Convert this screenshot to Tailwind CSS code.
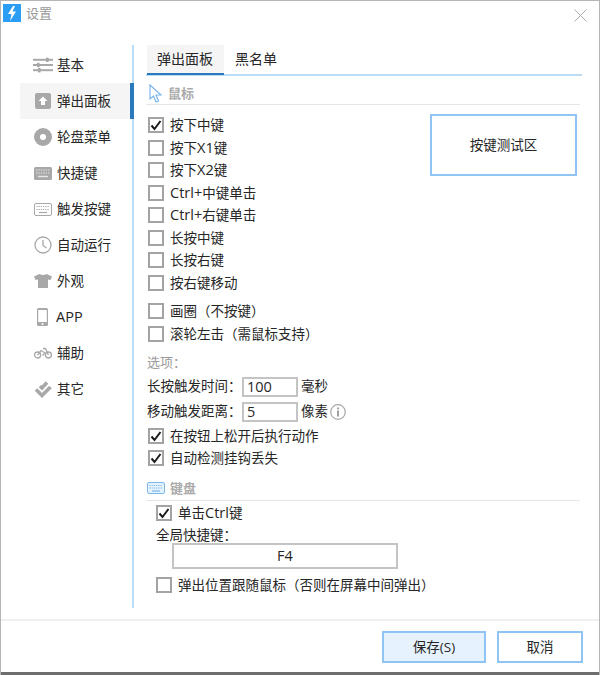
<!DOCTYPE html>
<html lang="zh-CN">
<head>
    <meta charset="UTF-8">
    <title>设置</title>
    <script src="https://cdn.jsdelivr.net/npm/@tailwindcss/browser@4"></script>
</head>
<body class="bg-white">
<div class="w-[600px] h-[675px] flex flex-col bg-white overflow-hidden border-x border-t border-[#b5b5b5] font-['Open_Sans','Noto_Sans_CJK_SC',sans-serif] text-[13.5px] text-[#262626] relative">
    <!-- title bar -->
    <div class="h-[44px] shrink-0 flex items-start pt-[3px] pl-[2px]">
        <div class="w-[18px] h-[18px] bg-[#2a9df4] flex items-center justify-center">
            <svg width="10" height="15" viewBox="0 0 10 15"><path d="M6 0 L1 8 L4.5 8 L3 15 L9 5.5 L5.5 5.5 L8 0 Z" fill="#fff"/></svg>
        </div>
        <span class="ml-[5px] text-[13px] leading-[18px] text-[#999]">设置</span>
        <svg class="ml-auto mr-[12px] mt-[5px]" width="13" height="13" viewBox="0 0 13 13"><path d="M0.5 0.5 L12.5 12.5 M12.5 0.5 L0.5 12.5" stroke="#aaa" stroke-width="1" fill="none"/></svg>
    </div>

    <div class="flex h-[563px] shrink-0">
        <!-- sidebar -->
        <div class="w-[133px] shrink-0 border-r-2 border-[#bcdcf6] pl-[19px] flex flex-col">
            <div class="h-[38px] pt-[2px] shrink-0 flex items-center w-[112px]">
                <svg class="ml-[13px] w-[20px] h-[16px]" viewBox="0 0 20 16" fill="#a8a8a8"><rect y="1.8" width="20" height="2"/><rect y="7" width="20" height="2"/><rect y="12.2" width="20" height="2"/><rect x="13" y="0.6" width="2.6" height="4.4"/><rect x="4" y="5.8" width="2.6" height="4.4"/><rect x="5" y="11" width="2.6" height="4.4"/></svg>
                <span class="ml-[4px]">基本</span>
            </div>
            <div class="h-[36px] shrink-0 flex items-center w-[114px] -mr-[2px] bg-[#f5f5f5] border-r-[4px] border-[#2a79bd]">
                <svg class="ml-[15px] w-[16px] h-[16px]" viewBox="0 0 16 16"><rect width="16" height="16" rx="2" fill="#a8a8a8"/><path d="M8 3.5 L12.5 8 L10 8 L10 12 L6 12 L6 8 L3.5 8 Z" fill="#fff"/></svg>
                <span class="ml-[6px]">弹出面板</span>
            </div>
            <div class="h-[36px] shrink-0 flex items-center">
                <svg class="ml-[14px] w-[18px] h-[18px]" viewBox="0 0 18 18"><circle cx="9" cy="9" r="6" fill="none" stroke="#a8a8a8" stroke-width="6"/></svg>
                <span class="ml-[5px]">轮盘菜单</span>
            </div>
            <div class="h-[36px] shrink-0 flex items-center">
                <svg class="ml-[14px] w-[18px] h-[13px]" viewBox="0 0 18 13"><rect width="18" height="13" rx="1.5" fill="#a8a8a8"/><path d="M2 3 H16 M2 6 H16" stroke="#e6e6e6" stroke-width="1.2" stroke-dasharray="1.4 1"/><path d="M4 9.5 H14" stroke="#e6e6e6" stroke-width="1.4"/></svg>
                <span class="ml-[5px]">快捷键</span>
            </div>
            <div class="h-[36px] shrink-0 flex items-center">
                <svg class="ml-[14px] w-[18px] h-[13px]" viewBox="0 0 18 13"><rect x="0.5" y="0.5" width="17" height="12" rx="1.5" fill="#fff" stroke="#a8a8a8"/><path d="M2.5 3.5 H15.5 M2.5 6.5 H15.5" stroke="#a8a8a8" stroke-width="1.2" stroke-dasharray="1.2 1"/><path d="M5 9.5 H13" stroke="#a8a8a8" stroke-width="1.2"/></svg>
                <span class="ml-[5px]">触发按键</span>
            </div>
            <div class="h-[36px] shrink-0 flex items-center">
                <svg class="ml-[14px] w-[18px] h-[18px]" viewBox="0 0 18 18" fill="none" stroke="#a8a8a8"><circle cx="9" cy="9" r="8" stroke-width="1.3"/><path d="M9 4 V9.5 L12.5 12" stroke-width="1.3"/></svg>
                <span class="ml-[5px]">自动运行</span>
            </div>
            <div class="h-[36px] shrink-0 flex items-center">
                <svg class="ml-[14px] w-[18px] h-[14px]" viewBox="0 0 18 14"><path d="M5.5 0 Q9 2 12.5 0 L18 2.5 L16.5 6 L14 5.5 L14 14 L4 14 L4 5.5 L1.5 6 L0 2.5 Z" fill="#a8a8a8"/></svg>
                <span class="ml-[5px]">外观</span>
            </div>
            <div class="h-[36px] shrink-0 flex items-center">
                <svg class="ml-[17px] w-[11px] h-[18px]" viewBox="0 0 11 18"><rect width="11" height="18" rx="1.5" fill="#a8a8a8"/><rect x="1.2" y="2" width="8.6" height="12" fill="#fff"/><circle cx="5.5" cy="16" r="1" fill="#fff"/></svg>
                <span class="ml-[8px] text-[14.5px]">APP</span>
            </div>
            <div class="h-[36px] shrink-0 flex items-center">
                <svg class="ml-[14px] w-[18px] h-[12px]" viewBox="0 0 18 12" fill="none" stroke="#a8a8a8" stroke-width="1.3"><circle cx="3.6" cy="8" r="3"/><circle cx="14.4" cy="8" r="3"/><path d="M3.6 8 L7 3.5 L11 6 L8.5 8.5 M14.4 8 L11.5 1.5 H9"/></svg>
                <span class="ml-[5px]">辅助</span>
            </div>
            <div class="h-[36px] shrink-0 flex items-center">
                <svg class="ml-[14px] w-[18px] h-[18px]" viewBox="0 0 18 18" fill="none" stroke="#a8a8a8" stroke-width="3.6"><path d="M2 9.5 L8 15.5 L16.5 7"/><path d="M6 6 L8 8 L13 2.5"/></svg>
                <span class="ml-[5px]">其它</span>
            </div>
        </div>

        <!-- content -->
        <div class="flex-1 min-w-0 pl-[12px] flex flex-col">
            <!-- tabs -->
            <div class="h-[31px] shrink-0 w-[436px] flex border-b-2 border-[#bcdcf6]">
                <div class="ml-[1px] w-[77px] h-[30px] pl-[10px] bg-[#f5f5f5] border-b-2 border-[#2a79bd] text-[14px] leading-[28px]">弹出面板</div>
                <div class="ml-[11px] text-[14px] leading-[28px]">黑名单</div>
            </div>
            <!-- mouse section -->
            <div class="h-[29px] shrink-0 w-[434px] flex items-end pl-[3px] border-b border-[#e6e6e6]">
                <svg class="mb-[1px]" width="13" height="19" viewBox="0 0 13 19"><path d="M1 1 L1 15 L4.5 12 L7 18 L9.5 17 L7 11 L12 11 Z" fill="#fff" stroke="#7db8ee" stroke-width="1.2"/></svg>
                <span class="ml-[6px] text-[13px] leading-[22px] font-bold text-[#aaa]">鼠标</span>
            </div>

            <div class="flex shrink-0">
                <div class="w-[284px] pl-[2px] pt-[9px] shrink-0">
                    <label class="flex items-center h-[22.5px]"><span class="w-[16px] h-[16px] border-2 border-[#a3a3a3] flex items-center justify-center"><svg width="12" height="11" viewBox="0 0 12 11"><path d="M1.5 5.5 L4.5 9 L10.5 1" fill="none" stroke="#1a1a1a" stroke-width="2"/></svg></span><span class="ml-[6px]">按下中键</span></label>
                    <label class="flex items-center h-[22.5px]"><span class="w-[16px] h-[16px] border-2 border-[#a3a3a3]"></span><span class="ml-[6px]">按下<span class="text-[14.5px]">X1</span>键</span></label>
                    <label class="flex items-center h-[22.5px]"><span class="w-[16px] h-[16px] border-2 border-[#a3a3a3]"></span><span class="ml-[6px]">按下<span class="text-[14.5px]">X2</span>键</span></label>
                    <label class="flex items-center h-[22.5px]"><span class="w-[16px] h-[16px] border-2 border-[#a3a3a3]"></span><span class="ml-[6px]"><span class="text-[14.5px]">Ctrl+</span>中键单击</span></label>
                    <label class="flex items-center h-[22.5px]"><span class="w-[16px] h-[16px] border-2 border-[#a3a3a3]"></span><span class="ml-[6px]"><span class="text-[14.5px]">Ctrl+</span>右键单击</span></label>
                    <label class="flex items-center h-[22.5px]"><span class="w-[16px] h-[16px] border-2 border-[#a3a3a3]"></span><span class="ml-[6px]">长按中键</span></label>
                    <label class="flex items-center h-[22.5px]"><span class="w-[16px] h-[16px] border-2 border-[#a3a3a3]"></span><span class="ml-[6px]">长按右键</span></label>
                    <label class="flex items-center h-[22.5px]"><span class="w-[16px] h-[16px] border-2 border-[#a3a3a3]"></span><span class="ml-[6px]">按右键移动</span></label>
                    <label class="flex items-center h-[22.5px] mt-[6px]"><span class="w-[16px] h-[16px] border-2 border-[#a3a3a3]"></span><span class="ml-[6px]">画圈（不按键）</span></label>
                    <label class="flex items-center h-[22.5px]"><span class="w-[16px] h-[16px] border-2 border-[#a3a3a3]"></span><span class="ml-[6px]">滚轮左击（需鼠标支持）</span></label>
                </div>
                <div class="mt-[9px] w-[147px] h-[62px] border-2 border-[#8fc4f5] flex items-center justify-center">按键测试区</div>
            </div>

            <!-- options -->
            <div class="pl-[1px] mt-[7px] h-[20px] leading-[20px] text-[#9a9a9a] text-[13px]">选项：</div>
            <div class="flex items-center h-[25px] mt-[2px] pl-[1px]">
                <span class="w-[95px]">长按触发时间：</span>
                <span class="w-[56px] h-[20px] border-2 border-[#c4c4c4] pl-[3px] leading-[16px] text-[14.5px]">100</span>
                <span class="ml-[3px]">毫秒</span>
            </div>
            <div class="flex items-center h-[25px] pl-[1px]">
                <span class="w-[95px]">移动触发距离：</span>
                <span class="w-[56px] h-[20px] border-2 border-[#c4c4c4] pl-[3px] leading-[16px] text-[14.5px]">5</span>
                <span class="ml-[3px]">像素</span>
                <svg class="ml-[2px]" width="16" height="16" viewBox="0 0 16 16"><circle cx="8" cy="8" r="7.3" fill="none" stroke="#a8a8a8" stroke-width="1.2"/><rect x="7.2" y="6.5" width="1.6" height="6" fill="#8a8a8a"/><rect x="7.2" y="3.5" width="1.6" height="1.8" fill="#8a8a8a"/></svg>
            </div>
            <div class="pl-[2px] mt-[1px]">
                <label class="flex items-center h-[22px]"><span class="w-[16px] h-[16px] border-2 border-[#a3a3a3] flex items-center justify-center"><svg width="12" height="11" viewBox="0 0 12 11"><path d="M1.5 5.5 L4.5 9 L10.5 1" fill="none" stroke="#1a1a1a" stroke-width="2"/></svg></span><span class="ml-[6px]">在按钮上松开后执行动作</span></label>
                <label class="flex items-center h-[22px]"><span class="w-[16px] h-[16px] border-2 border-[#a3a3a3] flex items-center justify-center"><svg width="12" height="11" viewBox="0 0 12 11"><path d="M1.5 5.5 L4.5 9 L10.5 1" fill="none" stroke="#1a1a1a" stroke-width="2"/></svg></span><span class="ml-[6px]">自动检测挂钩丢失</span></label>
            </div>

            <!-- keyboard section -->
            <div class="h-[33px] mt-[-1px] shrink-0 w-[434px] flex items-end pl-[1px] pb-[1px] border-b border-[#e6e6e6]">
                <svg class="mb-[5px]" width="18" height="12" viewBox="0 0 18 12"><rect x="0.5" y="0.5" width="17" height="11" rx="1.5" fill="#e4f2fd" stroke="#7db8ee"/><path d="M2.5 3.5 H15.5 M2.5 6 H15.5" stroke="#7db8ee" stroke-width="1.2" stroke-dasharray="1.2 1"/><path d="M5 9 H13" stroke="#7db8ee" stroke-width="1.2"/></svg>
                <span class="ml-[5px] text-[13px] leading-[22px] font-bold text-[#aaa]">键盘</span>
            </div>
            <div class="pl-[10px] pt-[1px]">
                <label class="flex items-center h-[22.5px]"><span class="w-[16px] h-[16px] border-2 border-[#a3a3a3] flex items-center justify-center"><svg width="12" height="11" viewBox="0 0 12 11"><path d="M1.5 5.5 L4.5 9 L10.5 1" fill="none" stroke="#1a1a1a" stroke-width="2"/></svg></span><span class="ml-[6px]">单击<span class="text-[14.5px]">Ctrl</span>键</span></label>
                <div class="h-[18px] leading-[21px]">全局快捷键：</div>
                <div class="ml-[16px] w-[226px] h-[26px] border-2 border-[#c4c4c4] text-center leading-[22px] text-[14.5px]">F4</div>
                <label class="flex items-center h-[22.5px] mt-[5px]"><span class="w-[16px] h-[16px] border-2 border-[#a3a3a3]"></span><span class="ml-[6px]">弹出位置跟随鼠标（否则在屏幕中间弹出）</span></label>
            </div>
        </div>
    </div>

    <!-- footer -->
    <div class="mt-[11px] flex-1 border-t-2 border-[#f0f0f0] flex justify-end items-start pt-[10px] pr-[16px] gap-[11px]">
        <button class="w-[104px] h-[32px] bg-[#e6f3fe] border-2 border-[#8fc4f5]">保存(S)</button>
        <button class="w-[86px] h-[32px] bg-white border-2 border-[#8fc4f5]">取消</button>
    </div>
    <div class="h-[3px] shrink-0 bg-[#6e6e6e]"></div>
</div>
</body>
</html>
